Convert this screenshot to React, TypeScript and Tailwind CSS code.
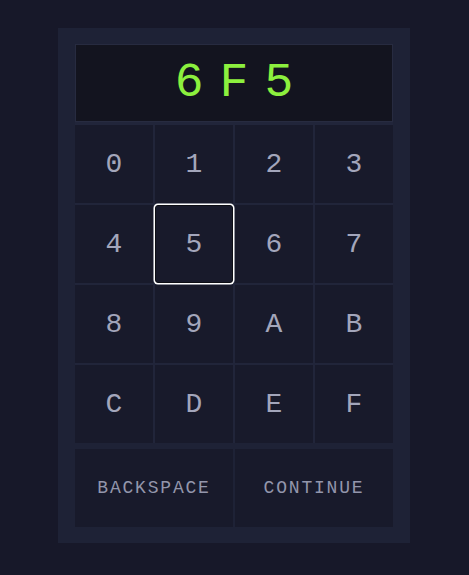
import { useState } from 'react'

const keys = ['0', '1', '2', '3', '4', '5', '6', '7', '8', '9', 'A', 'B', 'C', 'D', 'E', 'F']

export default function App() {
  const [value] = useState('6F5')
  const [selected] = useState('5')

  return (
    <div className="min-h-screen w-full bg-[#171829] flex pl-[58px] pt-7 font-['Liberation_Mono',monospace]">
      <div className="w-[352px] h-[515px] bg-[#1e2236] px-[17px] pt-4 pb-4 flex flex-col">
        {/* display */}
        <div className="h-[78px] border border-[#272b40] bg-[#13141f] flex items-center justify-center">
          <span className="text-5xl text-[#8cf03e] tracking-[16px] pl-[16px]">{value}</span>
        </div>

        <div className="pt-[3px] grid grid-cols-4 gap-0.5 bg-[#21253a]">
          {keys.map(k => (
            <button
              key={k}
              className={
                k === selected
                  ? 'h-[78px] flex items-center justify-center pt-0.5 text-[28px] text-[#a3a6bb] bg-[#181a2b] border border-[#0d0e15] rounded-[3px] shadow-[0_0_0_1.5px_#ffffff] relative z-10'
                  : 'h-[78px] flex items-center justify-center pt-0.5 text-[28px] text-[#a3a6bb] bg-[#181a2b]'
              }
            >
              {k}
            </button>
          ))}
        </div>

        <div className="mt-1.5 grid grid-cols-2 gap-0.5">
          <button className="h-[78px] flex items-center justify-center text-lg tracking-widest text-[#9396ab] bg-[#181a2b]">
            BACKSPACE
          </button>
          <button className="h-[78px] flex items-center justify-center text-lg tracking-widest text-[#9396ab] bg-[#181a2b]">
            CONTINUE
          </button>
        </div>
      </div>
    </div>
  )
}
